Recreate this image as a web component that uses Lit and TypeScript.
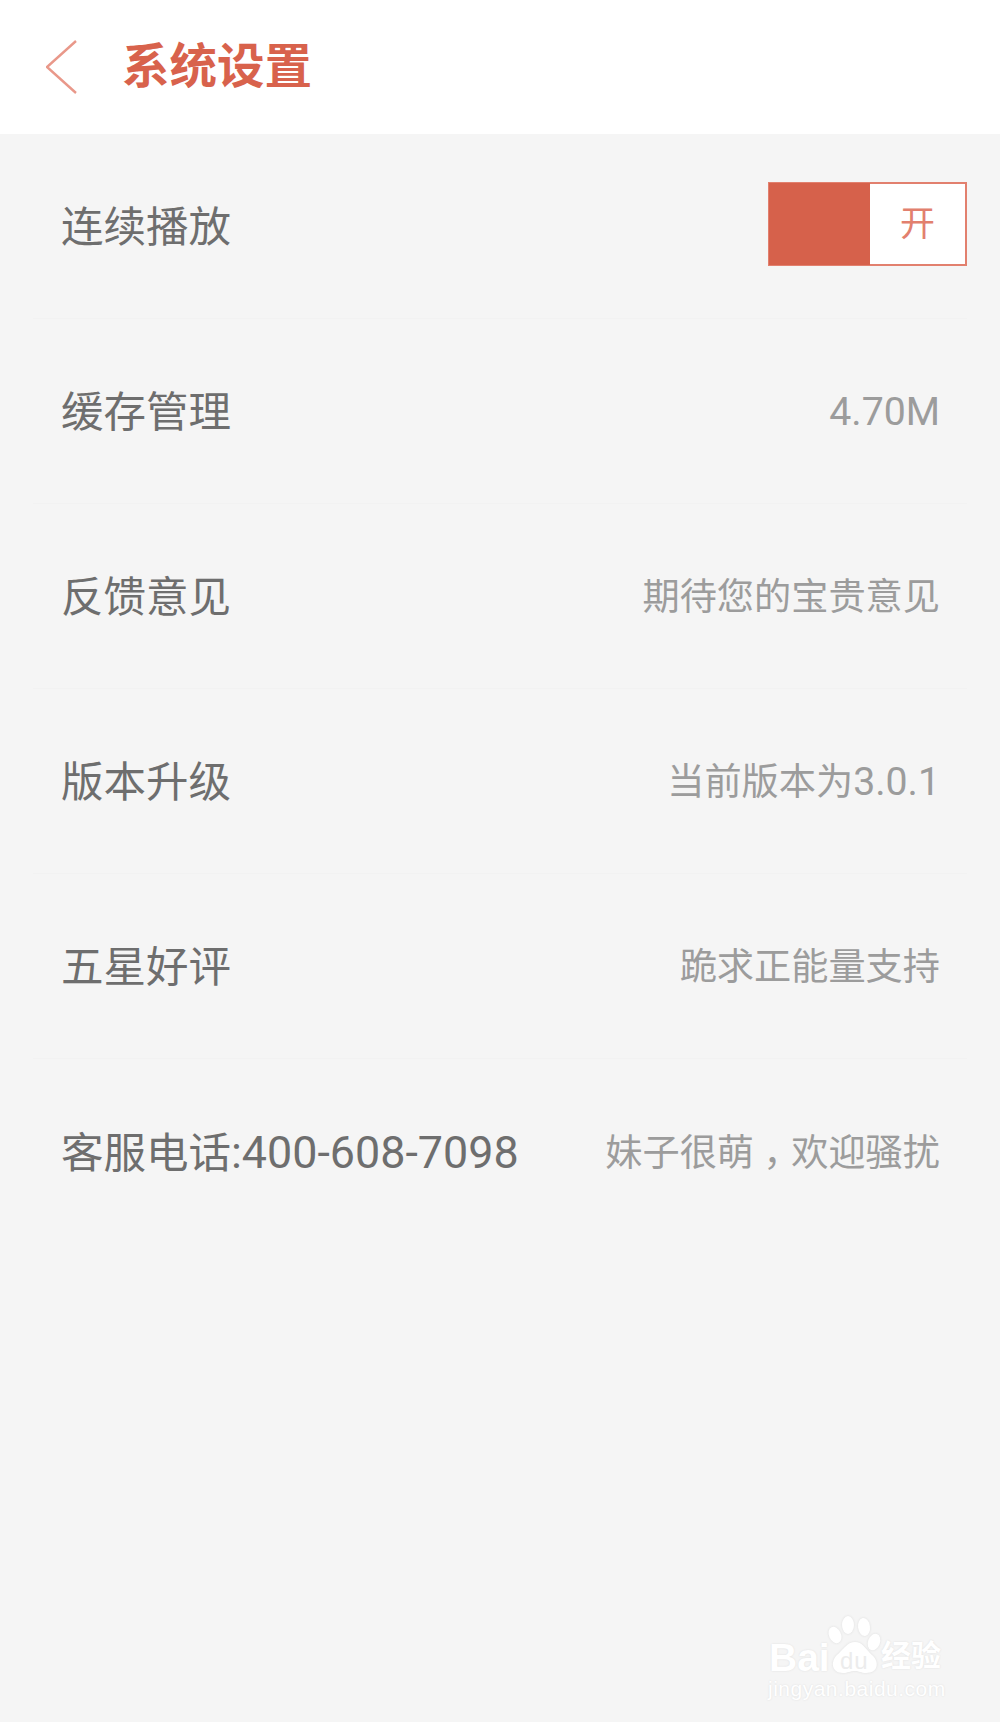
import { LitElement, html, css, svg } from "lit";
import { customElement } from "lit/decorators.js";

@customElement("app-root")
export class AppRoot extends LitElement {
  static styles = css`
    :host {
      display: block;
      width: 1000px;
      height: 1722px;
      position: relative;
      overflow: hidden;
      background: #f5f5f5;
      font-family: Roboto, "Noto Sans CJK SC", sans-serif;
    }
    .header {
      height: 134px;
      background: #fff;
      display: flex;
      align-items: center;
      padding-left: 46px;
      box-sizing: border-box;
    }
    .back { display: block; width: 32px; height: 56px; flex: none; }
    .title {
      margin-left: 44px;
      padding-top: 2px;
      font-size: 47.5px;
      font-weight: 700;
      color: #d8624c;
      line-height: 1;
    }
    .list { padding: 0 33px; }
    .row {
      height: 185px;
      box-sizing: border-box;
      border-bottom: 1px solid #f2f2f2;
      display: flex;
      align-items: center;
      justify-content: space-between;
      padding: 4px 27px 0 28px;
    }
    .row:last-child { border-bottom: none; }
    .row.first { padding-right: 0; }
    .label { font-size: 42.5px; color: #6e6e6e; line-height: 1; }
    .value { font-size: 37.2px; color: #9c9c9c; line-height: 1; }
    .num { font-size: 1.055em; }
    .comma { font-feature-settings: "halt"; padding: 0 0.25em; }
    .toggle {
      width: 199px;
      height: 84px;
      box-sizing: border-box;
      border: 2px solid #e2806e;
      display: flex;
      background: #fff;
      transform: translateY(-4px);
    }
    .knob { width: 101px; margin: -1px 0 -1px -1px; background: #d6614b; flex: none; }
    .state {
      flex: 1;
      display: flex;
      align-items: center;
      justify-content: center;
      font-size: 35px;
      line-height: 1;
      color: #e2806e;
    }
    .mark {
      position: absolute;
      left: 766px;
      top: 1612px;
      width: 190px;
      height: 95px;
      color: #fff;
      text-shadow: 0 0 2px #dcdcdc;
    }
    .mark svg { position: absolute; left: 0; top: 0; filter: drop-shadow(0 0 1px #dcdcdc); }
    .bai, .du, .jy, .url { position: absolute; line-height: 1; white-space: nowrap; }
    .bai { left: 3px; top: 26px; font-size: 39px; font-weight: 700; font-family: "Liberation Sans", sans-serif; }
    .du { left: 74px; top: 37px; font-size: 24px; color: #ececec; text-shadow: none; font-family: "Liberation Sans", sans-serif; letter-spacing: 1px; }
    .jy { left: 115px; top: 29px; font-size: 30px; font-weight: 700; }
    .url { left: 2px; top: 66px; font-size: 21px; letter-spacing: 0.5px; font-family: "Liberation Sans", sans-serif; }
  `;

  render() {
    return html`
      <div class="header">
        <svg class="back" viewBox="0 0 32 56" fill="none">
          <path d="M30 2 L1 28 L30 54" stroke="#e9988a" stroke-width="2.4" />
        </svg>
        <div class="title">系统设置</div>
      </div>
      <div class="list">
        <div class="row first">
          <div class="label">连续播放</div>
          <div class="toggle"><div class="knob"></div><div class="state">开</div></div>
        </div>
        <div class="row">
          <div class="label">缓存管理</div>
          <div class="value"><span class="num">4.70M</span></div>
        </div>
        <div class="row">
          <div class="label">反馈意见</div>
          <div class="value">期待您的宝贵意见</div>
        </div>
        <div class="row">
          <div class="label">版本升级</div>
          <div class="value">当前版本为<span class="num">3.0.1</span></div>
        </div>
        <div class="row">
          <div class="label">五星好评</div>
          <div class="value">跪求正能量支持</div>
        </div>
        <div class="row">
          <div class="label">客服电话<span class="num">:400-608-7098</span></div>
          <div class="value">妹子很萌<span class="comma">，</span>欢迎骚扰</div>
        </div>
      </div>
      <div class="mark">
        <svg width="190" height="95" viewBox="0 0 190 95" fill="#fff">
          ${svg`
            <ellipse cx="69" cy="23" rx="6" ry="8.5" transform="rotate(-25 69 23)"/>
            <ellipse cx="82" cy="13" rx="6" ry="9"/>
            <ellipse cx="98" cy="15" rx="6" ry="9" transform="rotate(-8 98 15)"/>
            <ellipse cx="108" cy="30" rx="6" ry="8.5" transform="rotate(20 108 30)"/>
            <path d="M89 30 C97 30 100 38 106 43 C114 50 112 61 100 61 C95 61 93 59 89 59 C84 59 82 61 77 61 C66 61 64 50 71 43 C77 38 81 30 89 30 Z"/>
          `}
        </svg>
        <span class="bai">Bai</span>
        <span class="du">du</span>
        <span class="jy">经验</span>
        <span class="url">jingyan.baidu.com</span>
      </div>
    `;
  }
}
